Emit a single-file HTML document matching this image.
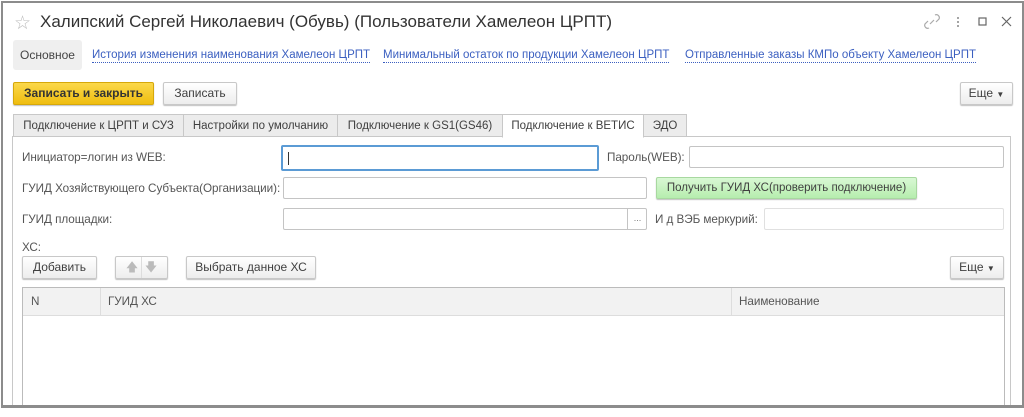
<!DOCTYPE html><html><head><meta charset="utf-8"><style>
body{margin:0;width:1024px;height:408px;background:#fff;font-family:"Liberation Sans",Arial,sans-serif;font-size:12px;color:#4d4d4d;position:relative;overflow:hidden}
.a{position:absolute}
.win{left:1px;top:1px;width:1019px;height:402px;border:2px solid #8c8c8c;border-bottom-width:3px;box-sizing:content-box;z-index:5}
.btn{position:absolute;box-sizing:border-box;border:1px solid #c8c8c8;border-radius:2px;background:linear-gradient(#fff,#ededed);box-shadow:0 1px 1px rgba(0,0,0,.25);text-align:center;color:#404040;font-size:12px}
.inp{position:absolute;box-sizing:border-box;border:1px solid #c4c4c4;border-radius:2px;background:#fff}
.lnk{position:absolute;top:49px;color:#3b5fc0;font-size:11.5px;border-bottom:1px dotted #3b5fc0;line-height:13px}
.tab{position:absolute;top:114px;height:23px;box-sizing:border-box;border:1px solid #c8c8c8;background:#ececec;line-height:22px;text-align:center;font-size:11.5px;color:#404040}
.lbl{position:absolute;font-size:11.7px;color:#555;letter-spacing:-0.05px}
</style></head><body>
<div class="a win"></div>
<div class="a" style="left:0;top:407px;width:1024px;height:10px;background:#fff;z-index:4"></div>
<div class="a" style="left:14px;top:12px;font-size:19px;color:#bbb">☆</div>
<div class="a" style="left:40px;top:12px;font-size:17px;color:#333">Халипский Сергей Николаевич (Обувь) (Пользователи Хамелеон ЦРПТ)</div>
<svg class="a" style="left:924px;top:14px" width="90" height="16"><path d="M13 3a3 3 0 0 1 4 4l-3 3M6 9l-3 3a3 3 0 0 0 4 4" transform="translate(-2,-2)" stroke="#aaa" fill="none" stroke-width="1.2"/><path d="M6 10l4-4" stroke="#aaa" stroke-width="1.2"/><circle cx="34" cy="4" r="1" fill="#888"/><circle cx="34" cy="8" r="1" fill="#888"/><circle cx="34" cy="12" r="1" fill="#888"/><rect x="55" y="4" width="7" height="7" fill="none" stroke="#666" stroke-width="1.2"/><path d="M78 3l9 9M87 3l-9 9" stroke="#666" stroke-width="1.2"/></svg>
<div class="a" style="left:13px;top:40px;width:69px;height:30px;background:#efefef;border-radius:3px;line-height:30px;text-align:center;color:#444;font-size:12px">Основное</div>
<div class="lnk" style="left:92px">История изменения наименования Хамелеон ЦРПТ</div>
<div class="lnk" style="left:383px">Минимальный остаток по продукции Хамелеон ЦРПТ</div>
<div class="lnk" style="left:685px">Отправленные заказы КМПо объекту Хамелеон ЦРПТ</div>
<div class="btn" style="left:13px;top:82px;width:141px;height:23px;line-height:21px;background:linear-gradient(#fbd84a,#efbd10);border-color:#d6a80a;color:#333;font-weight:bold">Записать и закрыть</div>
<div class="btn" style="left:163px;top:82px;width:74px;height:23px;line-height:21px">Записать</div>
<div class="btn" style="left:960px;top:82px;width:53px;height:23px;line-height:21px">Еще <span style="font-size:8px">▼</span></div>
<div class="a" style="left:12px;top:136px;width:999px;height:280px;border:1px solid #c8c8c8;box-sizing:border-box"></div>
<div class="tab" style="left:13px;width:171px">Подключение к ЦРПТ и СУЗ</div>
<div class="tab" style="left:183px;width:155px">Настройки по умолчанию</div>
<div class="tab" style="left:337px;width:166px">Подключение к GS1(GS46)</div>
<div class="tab" style="left:502px;width:142px;background:#fff;border-bottom-color:#fff;height:24px">Подключение к ВЕТИС</div>
<div class="tab" style="left:643px;width:44px">ЭДО</div>
<div class="lbl" style="left:22px;top:151px">Инициатор=логин из WEB:</div>
<div class="inp" style="left:281px;top:145px;width:318px;height:26px;border:2px solid #5b9bd5"><div class="a" style="left:5px;top:5px;width:1px;height:13px;background:#333"></div></div>
<div class="lbl" style="left:607px;top:151px">Пароль(WEB):</div>
<div class="inp" style="left:689px;top:146px;width:315px;height:22px"></div>
<div class="lbl" style="left:22px;top:182px">ГУИД Хозяйствующего Субъекта(Организации):</div>
<div class="inp" style="left:283px;top:177px;width:364px;height:22px"></div>
<div class="btn" style="left:656px;top:177px;width:261px;height:22px;line-height:20px;background:linear-gradient(#d9f8d4,#b6edae);border-color:#a8d8a0;font-size:11.5px">Получить ГУИД ХС(проверить подключение)</div>
<div class="lbl" style="left:22px;top:213px">ГУИД площадки:</div>
<div class="inp" style="left:283px;top:208px;width:364px;height:22px"><div class="a" style="left:343px;top:0;width:19px;height:20px;border-left:1px solid #c4c4c4;text-align:center;font-size:9px;line-height:18px;color:#777">...</div></div>
<div class="lbl" style="left:655px;top:213px">И д ВЭБ меркурий:</div>
<div class="inp" style="left:764px;top:208px;width:240px;height:22px;border-color:#e0e0e0"></div>
<div class="lbl" style="left:22px;top:241px">ХС:</div>
<div class="btn" style="left:22px;top:256px;width:75px;height:23px;line-height:21px">Добавить</div>
<div class="btn" style="left:115px;top:256px;width:53px;height:23px;line-height:21px;color:#bbb;font-size:12px">🡅&nbsp;&nbsp;🡇</div>
<div class="a" style="left:141px;top:257px;width:1px;height:21px;background:#ddd"></div>
<div class="btn" style="left:186px;top:256px;width:130px;height:23px;line-height:21px">Выбрать данное ХС</div>
<div class="btn" style="left:950px;top:256px;width:54px;height:23px;line-height:21px">Еще <span style="font-size:8px">▼</span></div>
<div class="a" style="left:22px;top:287px;width:983px;height:130px;border:1px solid #bbb;box-sizing:border-box"></div>
<div class="a" style="left:23px;top:288px;width:981px;height:27px;background:#f2f2f2;border-bottom:1px solid #ddd"></div>
<div class="a" style="left:100px;top:288px;width:1px;height:27px;background:#ddd"></div>
<div class="a" style="left:731px;top:288px;width:1px;height:27px;background:#ddd"></div>
<div class="lbl" style="left:31px;top:295px">N</div>
<div class="lbl" style="left:108px;top:295px">ГУИД ХС</div>
<div class="lbl" style="left:739px;top:295px">Наименование</div>
</body></html>
